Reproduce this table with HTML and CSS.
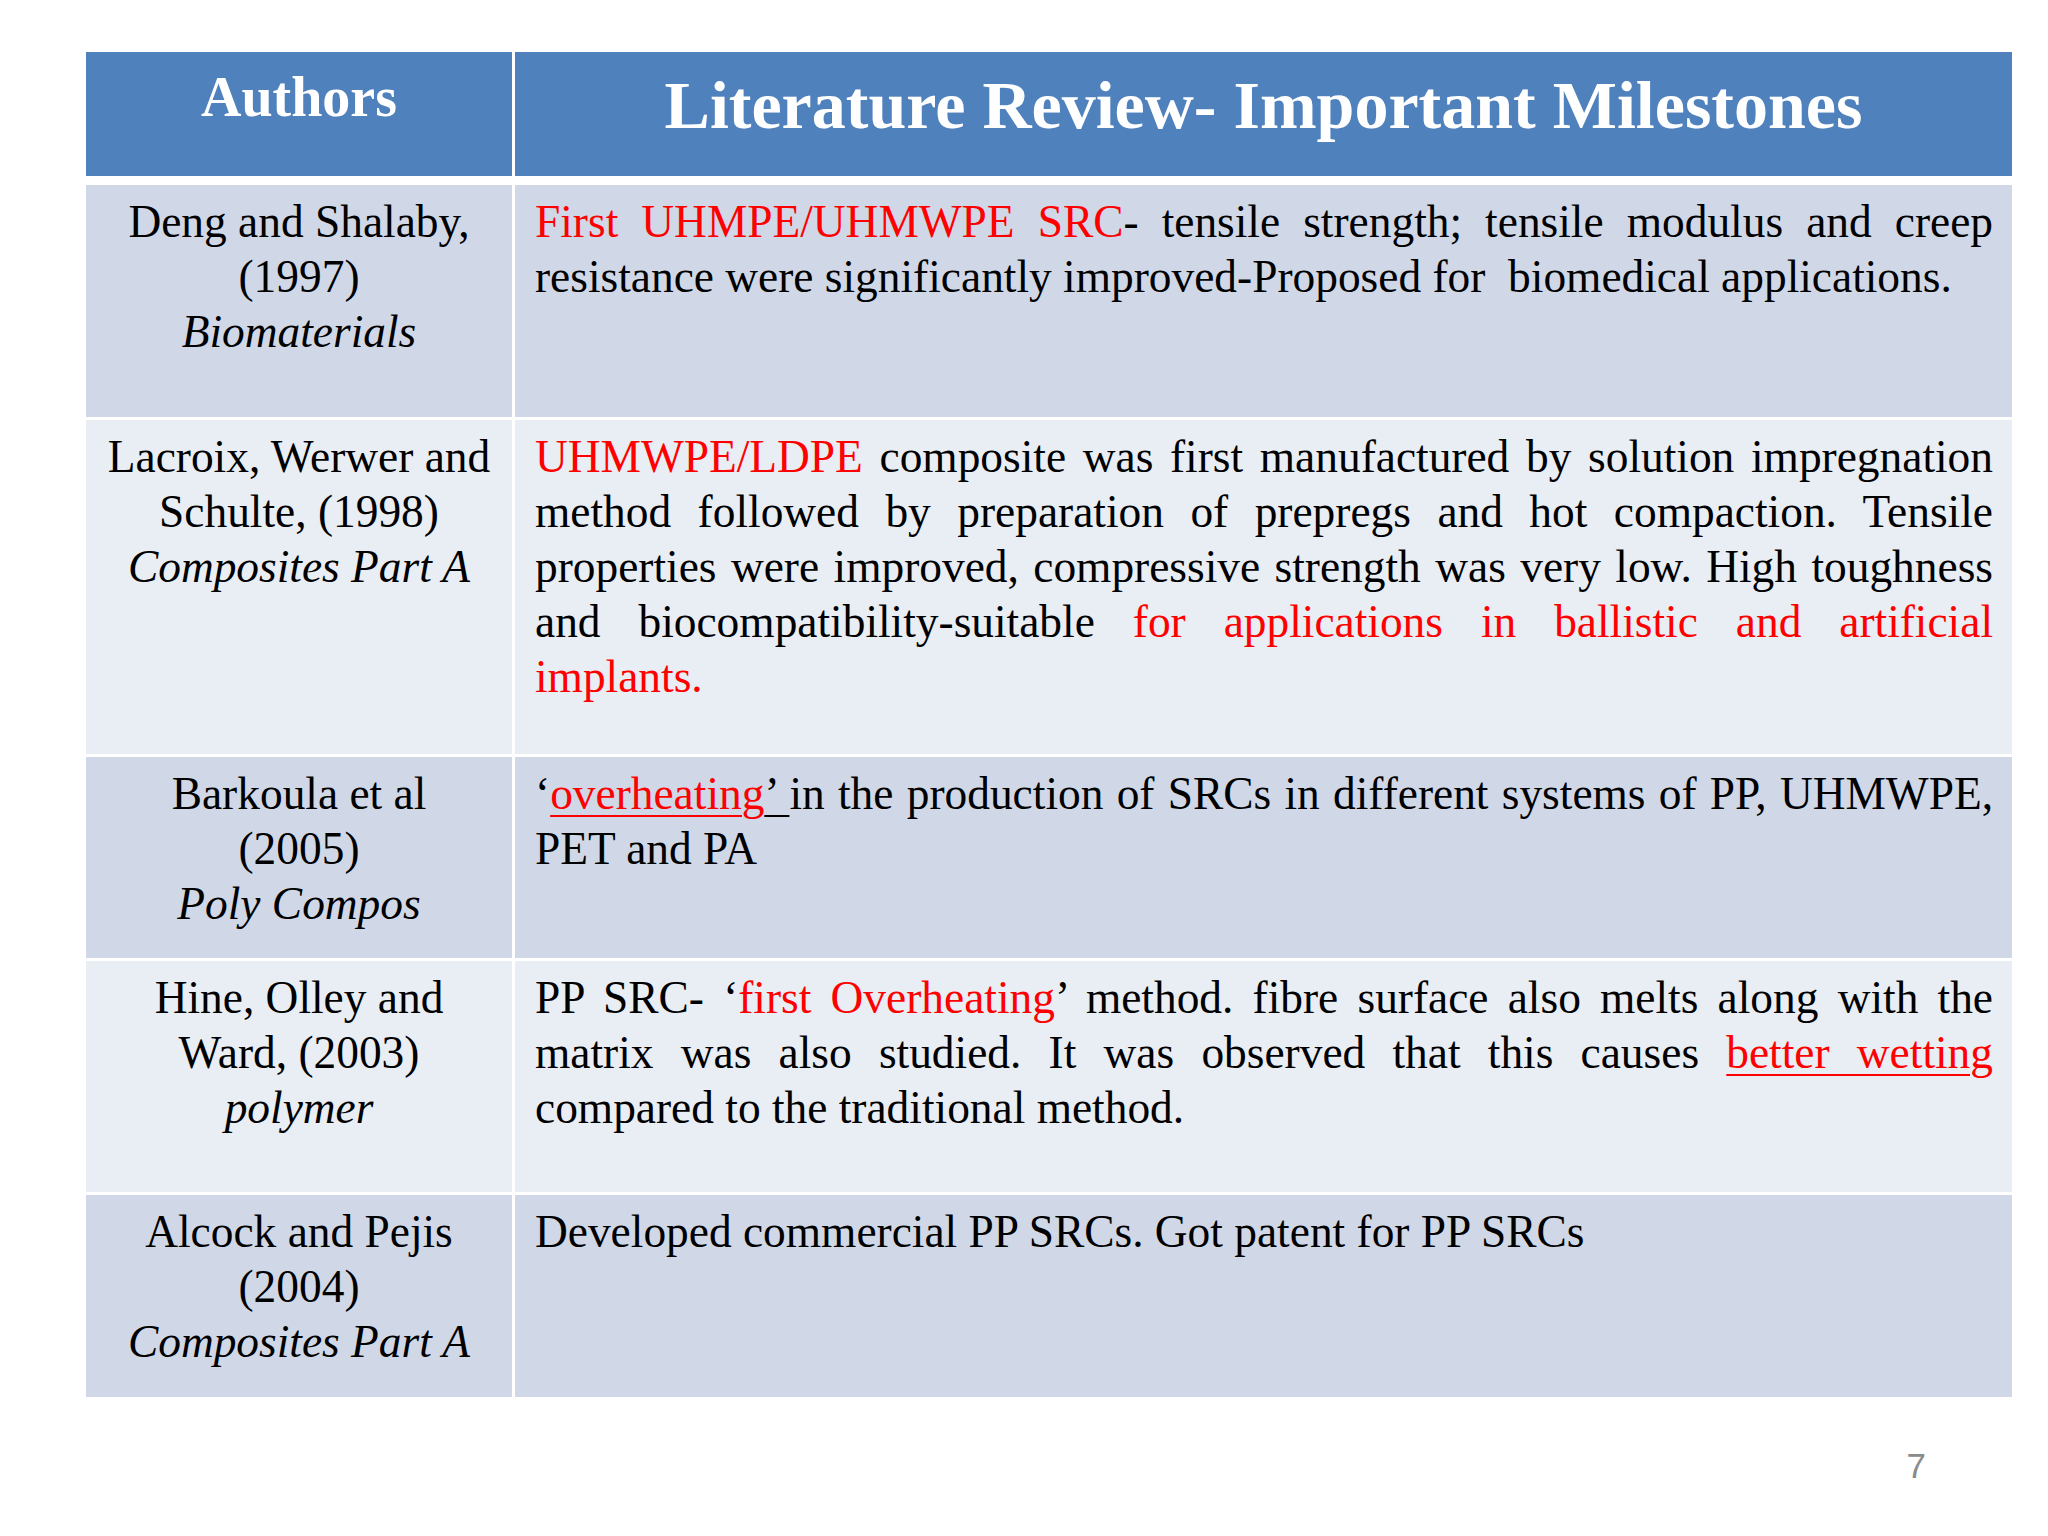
FILE: index.html
```html
<!DOCTYPE html>
<html lang="en">
<head>
<meta charset="utf-8">
<title>Literature Review- Important Milestones</title>
<link rel="stylesheet" href="styles.css">
</head>
<body>
<div class="slide">
  <div class="table">
    <div class="row head">
      <div class="cell hcell authors">Authors</div>
      <div class="cell hcell title">Literature Review- Important Milestones</div>
    </div>
    <div class="body">
      <div class="row dark h1">
        <div class="cell author">
          <div class="ln">Deng and Shalaby,</div>
          <div class="ln">(1997)</div>
          <div class="ln it">Biomaterials</div>
        </div>
        <div class="cell desc">
          <div class="jl"><span class="red">First UHMPE/UHMWPE SRC</span>- tensile strength; tensile modulus and creep</div>
          <div class="ll">resistance were significantly improved-Proposed for&nbsp; biomedical applications.</div>
        </div>
      </div>
      <div class="row light h2">
        <div class="cell author">
          <div class="ln">Lacroix, Werwer and</div>
          <div class="ln">Schulte, (1998)</div>
          <div class="ln it">Composites Part A</div>
        </div>
        <div class="cell desc">
          <div class="jl"><span class="red">UHMWPE/LDPE</span> composite was first manufactured by solution impregnation</div>
          <div class="jl">method followed by preparation of prepregs and hot compaction. Tensile</div>
          <div class="jl">properties were improved, compressive strength was very low. High toughness</div>
          <div class="jl">and biocompatibility-suitable <span class="red">for applications in ballistic and artificial</span></div>
          <div class="ll"><span class="red">implants.</span></div>
        </div>
      </div>
      <div class="row dark h3">
        <div class="cell author">
          <div class="ln">Barkoula et al</div>
          <div class="ln">(2005)</div>
          <div class="ln it">Poly Compos</div>
        </div>
        <div class="cell desc">
          <div class="jl">&lsquo;<span class="red ul">overheating</span><span class="ul">&rsquo; </span>in the production of SRCs in different systems of PP, UHMWPE,</div>
          <div class="ll">PET and PA</div>
        </div>
      </div>
      <div class="row light h4">
        <div class="cell author">
          <div class="ln">Hine, Olley and</div>
          <div class="ln">Ward, (2003)</div>
          <div class="ln it">polymer</div>
        </div>
        <div class="cell desc">
          <div class="jl">PP SRC- &lsquo;<span class="red">first Overheating</span>&rsquo; method. fibre surface also melts along with the</div>
          <div class="jl">matrix was also studied. It was observed that this causes <span class="red ul">better wetting</span></div>
          <div class="ll">compared to the traditional method.</div>
        </div>
      </div>
      <div class="row dark h5">
        <div class="cell author">
          <div class="ln">Alcock and Pejis</div>
          <div class="ln">(2004)</div>
          <div class="ln it">Composites Part A</div>
        </div>
        <div class="cell desc">
          <div class="ll">Developed commercial PP SRCs. Got patent for PP SRCs</div>
        </div>
      </div>
    </div>
  </div>
  <div class="pagenum">7</div>
</div>
</body>
</html>
```

FILE: styles.css
```css
html, body {
  margin: 0;
  padding: 0;
  background: #ffffff;
}

.slide {
  width: 2048px;
  height: 1536px;
  box-sizing: border-box;
  padding: 52px 0 0 86px;
  font-family: "Liberation Serif", "Times New Roman", serif;
  color: #000000;
}

.table {
  width: 1926px;
  display: flex;
  flex-direction: column;
  gap: 9px;
}

.body {
  display: flex;
  flex-direction: column;
  gap: 3px;
}

.row {
  display: grid;
  grid-template-columns: 426px 1497px;
  column-gap: 3px;
}

.cell {
  box-sizing: border-box;
  font-size: 45.4px;
  line-height: 55px;
}

.head {
  height: 124px;
}

.head .hcell {
  background: #4f81bd;
  color: #ffffff;
  font-weight: bold;
  text-align: center;
}

.head .authors {
  font-size: 56px;
  line-height: 64px;
  padding-top: 13px;
}

.head .title {
  font-size: 68px;
  line-height: 76px;
  padding-top: 15px;
}

.h1 { height: 232px; }
.h2 { height: 334px; }
.h3 { height: 201px; }
.h4 { height: 231px; }
.h5 { height: 202px; }

.dark .cell { background: #d0d8e8; }
.light .cell { background: #e9edf4; }

.author {
  text-align: center;
  padding-top: 10px;
}

.ln {
  white-space: nowrap;
}

.it {
  font-style: italic;
}

.desc {
  padding: 10px 19px 0 20px;
}

.jl {
  text-align: justify;
  text-align-last: justify;
}

.ll {
  text-align: left;
  white-space: nowrap;
}

.red {
  color: #ff0000;
}

.ul {
  text-decoration: underline;
  text-decoration-thickness: 2px;
  text-underline-offset: 6px;
}

.pagenum {
  width: 1926px;
  margin-top: 49px;
  box-sizing: border-box;
  padding-right: 86px;
  text-align: right;
  font-family: "Liberation Sans", Arial, sans-serif;
  font-size: 35px;
  line-height: 40px;
  color: #8b8b8b;
}
```
